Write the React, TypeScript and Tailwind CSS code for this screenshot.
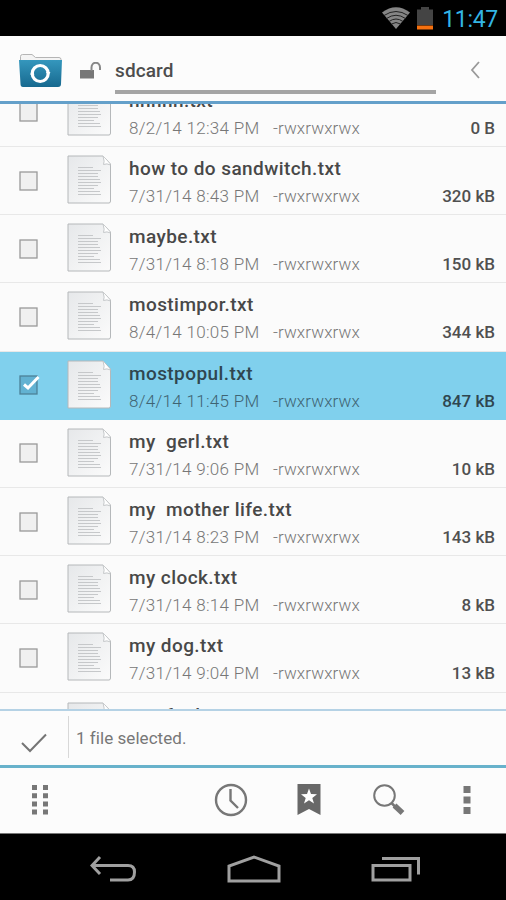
import clsx from "clsx";

interface FileEntry {
  name: string;
  date: string;
  size: string;
  selected?: boolean;
}

const files: FileEntry[] = [
  { name: "hhhhh.txt", date: "8/2/14 12:34 PM", size: "0 B" },
  { name: "how to do sandwitch.txt", date: "7/31/14 8:43 PM", size: "320 kB" },
  { name: "maybe.txt", date: "7/31/14 8:18 PM", size: "150 kB" },
  { name: "mostimpor.txt", date: "8/4/14 10:05 PM", size: "344 kB" },
  { name: "mostpopul.txt", date: "8/4/14 11:45 PM", size: "847 kB", selected: true },
  { name: "my  gerl.txt", date: "7/31/14 9:06 PM", size: "10 kB" },
  { name: "my  mother life.txt", date: "7/31/14 8:23 PM", size: "143 kB" },
  { name: "my clock.txt", date: "7/31/14 8:14 PM", size: "8 kB" },
  { name: "my dog.txt", date: "7/31/14 9:04 PM", size: "13 kB" },
];

function StatusBar() {
  return (
    <div className="h-[36px] shrink-0 bg-black flex items-center justify-end pr-2">
      <svg width="28" height="22" viewBox="0 0 28 22">
        <path d="M0 5.5Q14 -5 28 5.5L14 22Z" fill="#858585" />
        <path d="M2 8.500Q14 0.500 26 8.500M4.500 11.500Q14 5 23.500 11.500M7 14.500Q14 9.500 21 14.500M9.500 17Q14 14 18.500 17" fill="none" stroke="#222" strokeWidth="1" />
      </svg>
      <svg width="16" height="23" viewBox="0 0 16 23" className="ml-[7px]">
        <path d="M0 2.500H4V0H12V2.500H16V18H0Z" fill="#444" />
        <path d="M0 18.500H16V22.500H0Z" fill="#f5700f" />
      </svg>
      <span className="ml-[9px] mt-[2px] text-[23px] leading-none text-[#33b5e5] tracking-[-0.3px]">11:47</span>
    </div>
  );
}

function Header() {
  return (
    <div className="h-[68px] shrink-0 border-b-[3px] border-[#64a0ca] bg-[#fcfcfc] flex">
      <svg width="44" height="36" viewBox="0 0 44 36" className="ml-[19px] mt-[17px]">
        <defs>
          <linearGradient id="folder" x1="0" y1="0" x2="0" y2="1">
            <stop offset="0" stopColor="#3597bd" />
            <stop offset="1" stopColor="#17698f" />
          </linearGradient>
        </defs>
        <path d="M1.500 9V3.500Q1.500 1.500 3.500 1.500H13L16.500 4.500H40Q42 4.500 42 6.500V9" fill="#f4f4f4" stroke="#b5b5b5" />
        <path d="M0 7H43L42 31Q42 34 39 34H4Q1.500 34 1.500 31Z" fill="url(#folder)" />
        <circle cx="21.200" cy="20.500" r="8" fill="none" stroke="#fff" strokeWidth="3.200" />
        <path d="M27 19H31.500L29 22.500ZM15.500 21.500H11L13.500 18Z" fill="#fff" />
      </svg>
      <svg width="22" height="18" viewBox="0 0 22 18" className="ml-[17px] mt-[26px]">
        <path d="M0 8H14V16.500H0Z" fill="#777" />
        <path d="M11.500 9V5.500A4 4.500 0 0 1 20 5.500V8" fill="none" stroke="#888" strokeWidth="2" />
      </svg>
      <div className="ml-[13px] w-[321px] h-[58px] border-b-4 border-[#a5a5a5] pt-[21px]">
        <span className="block text-[19px] leading-[28px] font-medium tracking-[0.1px] text-[#4d4d4d]">sdcard</span>
      </div>
      <svg width="10" height="18" viewBox="0 0 10 18" className="ml-[34px] mt-[25px]">
        <path d="M9 1L2 9L9 17" fill="none" stroke="#999" strokeWidth="1.800" />
      </svg>
    </div>
  );
}

function Checkbox({ checked }: { checked?: boolean }) {
  return (
    <svg width="22" height="20" viewBox="0 0 22 20" className="shrink-0">
      <rect x="1" y="1" width="17" height="18" fill={checked ? "#62b2d2" : "#f0f0f0"} stroke={checked ? "#4c8198" : "#999"} strokeWidth="1.300" />
      {checked && <path d="M5 9.500L9 13L19.500 2" fill="none" stroke="#fff" strokeWidth="3" />}
    </svg>
  );
}

function FileIcon() {
  return (
    <svg width="45" height="49" viewBox="0 0 45 49" className="shrink-0">
      <defs>
        <linearGradient id="paper" x1="0" y1="0" x2="1" y2="1">
          <stop offset="0" stopColor="#e6e8ea" />
          <stop offset="1" stopColor="#fbfbfb" />
        </linearGradient>
      </defs>
      <path d="M1 1H36L43.500 9V46Q43.500 48 42 48H1Z" fill="url(#paper)" stroke="#b5b8ba" />
      <path d="M36 1Q38 7 36.500 9.500Q40 8 43.500 10" fill="#fff" stroke="#c5c8ca" />
      <path
        d="M11 12.500H26M11 15.500H34M11 18.500H31M11 21.500H31M11 24.500H33M11 27.500H34M11 30.500H31M11 33.500H27M11 36.500H33M11 39.500H34"
        stroke="#c6c8ca"
        strokeWidth="1.200"
      />
    </svg>
  );
}

function FileRow({ file }: { file: FileEntry }) {
  return (
    <div
      className={clsx(
        "h-[68.2px] shrink-0 flex items-center border-b pl-[19px] pr-[11px]",
        file.selected ? "bg-[#80d0ed] border-[#80d0ed]" : "border-[#e8e8e8]"
      )}
    >
      <Checkbox checked={file.selected} />
      <div className="ml-[26px] -mt-[2px]">
        <FileIcon />
      </div>
      <div className="ml-[17px] mt-[4px] flex-1">
        <div
          className={clsx(
            "text-[19px] leading-[28px] font-medium whitespace-pre tracking-[0.42px]",
            file.selected ? "text-[#2f4650]" : "text-[#484848]"
          )}
        >
          {file.name}
        </div>
        <div className={clsx("flex text-[17px] leading-[27px]", file.selected ? "text-[#3f6473]" : "text-[#777]")}>
          <span className="w-[144px] font-light tracking-[0.3px]">{file.date}</span>
          <span className="flex-1 font-light tracking-[0.1px]">-rwxrwxrwx</span>
          <span className={clsx("font-medium", file.selected ? "text-[#2f4650]" : "text-[#505050]")}>{file.size}</span>
        </div>
      </div>
    </div>
  );
}

// Only the top of this row fits above the selection bar
function LastRow() {
  return (
    <div className="h-[17px] overflow-hidden flex pl-[67px]">
      <div className="mt-[9px]">
        <FileIcon />
      </div>
      <div className="ml-[17px] mt-[9px] text-[19px] leading-[28px] font-medium whitespace-pre tracking-[0.42px] text-[#484848]">
        {"my  find.txt"}
      </div>
    </div>
  );
}

function SelectionBar() {
  return (
    <div className="h-[59px] shrink-0 border-t-2 border-b-[3px] border-t-[#b5d2e5] border-b-[#68b2cb] bg-[#fcfcfc] flex">
      <svg width="26" height="20" viewBox="0 0 26 20" className="ml-[21px] mt-[22px]">
        <path d="M1 10L9 18L25 1.500" fill="none" stroke="#757575" strokeWidth="2" />
      </svg>
      <div className="ml-[21px] mt-[5px] h-[42px] w-px bg-[#d8d8d8]" />
      <span className="ml-[7px] mt-[13px] text-[17px] leading-[28px] tracking-[0.05px] text-[#777]">1 file selected.</span>
    </div>
  );
}

function Toolbar() {
  return (
    <div className="h-[65px] shrink-0 bg-[#fcfcfc] flex items-center pb-[2px] text-[#777]">
      <svg width="18" height="30" viewBox="0 0 18 30" fill="currentColor" className="ml-[31px]">
        <path d="M1 0h5v5h-5zM12 0h5v5h-5zM1 8.200h5v5h-5zM12 8.200h5v5h-5zM1 16.400h5v5h-5zM12 16.400h5v5h-5zM1 24.600h5v5h-5zM12 24.600h5v5h-5z" />
      </svg>
      <svg width="34" height="34" viewBox="0 0 34 34" fill="none" stroke="currentColor" strokeWidth="2.400" className="ml-[165px]">
        <circle cx="17" cy="17" r="15" />
        <path d="M16.500 6V17.500L24 25" />
      </svg>
      <svg width="24" height="31" viewBox="0 0 24 31" className="ml-[49px]">
        <path d="M0.500 0H23.500V31L12 25L0.500 31Z" fill="#686868" />
        <path d="M12 4.500L14 10L20 10.200L15.300 14L17 19.500L12 16.300L7 19.500L8.700 14L4 10.200L10 10Z" fill="#fff" />
      </svg>
      <svg width="32" height="32" viewBox="0 0 32 32" fill="none" stroke="currentColor" className="ml-[52px]">
        <circle cx="11.500" cy="11.500" r="10.300" strokeWidth="2" />
        <path d="M18.500 19L22 22.500" strokeWidth="2.500" />
        <path d="M21.500 21.500L29.500 29" strokeWidth="5.500" />
      </svg>
      <svg width="8" height="30" viewBox="0 0 8 30" fill="currentColor" className="ml-[58px]">
        <path d="M0.500 1h7v7h-7zM0.500 11.500h7v7h-7zM0.500 22h7v7h-7z" />
      </svg>
    </div>
  );
}

function NavBar() {
  return (
    <div className="h-[67px] shrink-0 bg-black border-t border-[#777] flex items-center text-[#a0a0a0]">
      <svg width="47" height="28" viewBox="0 0 47 28" fill="none" stroke="currentColor" strokeWidth="3" className="ml-[90px] mt-1">
        <path d="M10 2L2 10.500L10 19M2 10.500H38Q44.500 10.500 44.500 17Q44.500 25 38 25H20" />
      </svg>
      <svg width="54" height="29" viewBox="0 0 54 29" fill="none" stroke="currentColor" strokeWidth="3" className="ml-[90px] mt-1">
        <path d="M2 26V11L27 2L52 11V26Z" />
      </svg>
      <svg width="50" height="26" viewBox="0 0 50 26" fill="none" stroke="currentColor" strokeWidth="3" className="ml-[90px] mt-1">
        <path d="M2 9.500H39V24H2ZM11 2.500H47.500V18.500" />
      </svg>
    </div>
  );
}

export default function App() {
  return (
    <div className="w-[506px] h-[900px] overflow-hidden flex flex-col bg-black font-[Roboto,sans-serif]">
      <StatusBar />
      <Header />
      {/* The list is scrolled part of the way through its first row */}
      <div className="flex-1 min-h-0 overflow-hidden bg-[#fbfbfb] flex flex-col">
        <div className="-mt-[25.200px] flex flex-col">
          {files.map((file) => (
            <FileRow key={file.name} file={file} />
          ))}
          <LastRow />
        </div>
      </div>
      <SelectionBar />
      <Toolbar />
      <NavBar />
    </div>
  );
}
